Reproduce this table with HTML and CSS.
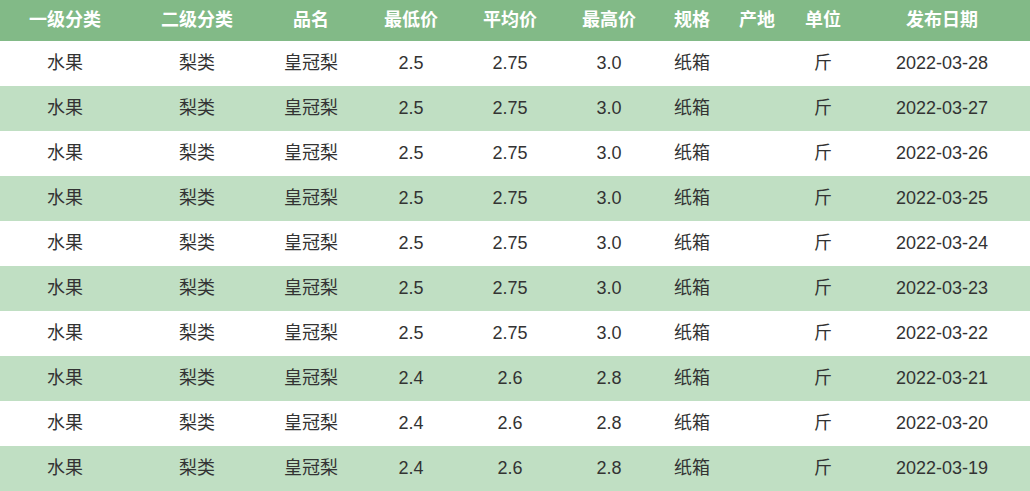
FILE: index.html
```html
<!DOCTYPE html>
<html lang="zh">
<head>
<meta charset="utf-8">
<title>价格表</title>
<link rel="stylesheet" href="styles.css">
</head>
<body>
<table class="price-table">
  <colgroup>
    <col class="c1"><col class="c2"><col class="c3"><col class="c4"><col class="c5">
    <col class="c6"><col class="c7"><col class="c8"><col class="c9"><col class="c10">
  </colgroup>
  <thead>
    <tr><th>一级分类</th><th>二级分类</th><th>品名</th><th>最低价</th><th>平均价</th><th>最高价</th><th>规格</th><th>产地</th><th>单位</th><th>发布日期</th></tr>
  </thead>
  <tbody>
    <tr><td>水果</td><td>梨类</td><td>皇冠梨</td><td>2.5</td><td>2.75</td><td>3.0</td><td>纸箱</td><td></td><td>斤</td><td>2022-03-28</td></tr>
    <tr><td>水果</td><td>梨类</td><td>皇冠梨</td><td>2.5</td><td>2.75</td><td>3.0</td><td>纸箱</td><td></td><td>斤</td><td>2022-03-27</td></tr>
    <tr><td>水果</td><td>梨类</td><td>皇冠梨</td><td>2.5</td><td>2.75</td><td>3.0</td><td>纸箱</td><td></td><td>斤</td><td>2022-03-26</td></tr>
    <tr><td>水果</td><td>梨类</td><td>皇冠梨</td><td>2.5</td><td>2.75</td><td>3.0</td><td>纸箱</td><td></td><td>斤</td><td>2022-03-25</td></tr>
    <tr><td>水果</td><td>梨类</td><td>皇冠梨</td><td>2.5</td><td>2.75</td><td>3.0</td><td>纸箱</td><td></td><td>斤</td><td>2022-03-24</td></tr>
    <tr><td>水果</td><td>梨类</td><td>皇冠梨</td><td>2.5</td><td>2.75</td><td>3.0</td><td>纸箱</td><td></td><td>斤</td><td>2022-03-23</td></tr>
    <tr><td>水果</td><td>梨类</td><td>皇冠梨</td><td>2.5</td><td>2.75</td><td>3.0</td><td>纸箱</td><td></td><td>斤</td><td>2022-03-22</td></tr>
    <tr><td>水果</td><td>梨类</td><td>皇冠梨</td><td>2.4</td><td>2.6</td><td>2.8</td><td>纸箱</td><td></td><td>斤</td><td>2022-03-21</td></tr>
    <tr><td>水果</td><td>梨类</td><td>皇冠梨</td><td>2.4</td><td>2.6</td><td>2.8</td><td>纸箱</td><td></td><td>斤</td><td>2022-03-20</td></tr>
    <tr><td>水果</td><td>梨类</td><td>皇冠梨</td><td>2.4</td><td>2.6</td><td>2.8</td><td>纸箱</td><td></td><td>斤</td><td>2022-03-19</td></tr>
  </tbody>
</table>
</body>
</html>
```
FILE: styles.css
```css
html, body {
  margin: 0;
  padding: 0;
  background: #ffffff;
}
body {
  font-family: "Liberation Sans", "Noto Sans CJK SC", sans-serif;
  color: #333333;
}
.price-table {
  width: 1030px;
  border-collapse: collapse;
  table-layout: fixed;
}
.c1 { width: 130px; }
.c2 { width: 134px; }
.c3 { width: 94px; }
.c4 { width: 106px; }
.c5 { width: 92px; }
.c6 { width: 106px; }
.c7 { width: 60px; }
.c8 { width: 70px; }
.c9 { width: 62px; }
.c10 { width: 176px; }
.price-table th,
.price-table td {
  padding: 0 0 2px;
  text-align: center;
  white-space: nowrap;
  font-size: 18px;
  line-height: 20px;
}
.price-table thead tr {
  background: #82ba87;
  height: 41px;
}
.price-table th {
  color: #ffffff;
  font-weight: bold;
}
.price-table tbody tr {
  height: 45px;
}
.price-table tbody tr:nth-child(even) {
  background: #c0dfc3;
}
```
